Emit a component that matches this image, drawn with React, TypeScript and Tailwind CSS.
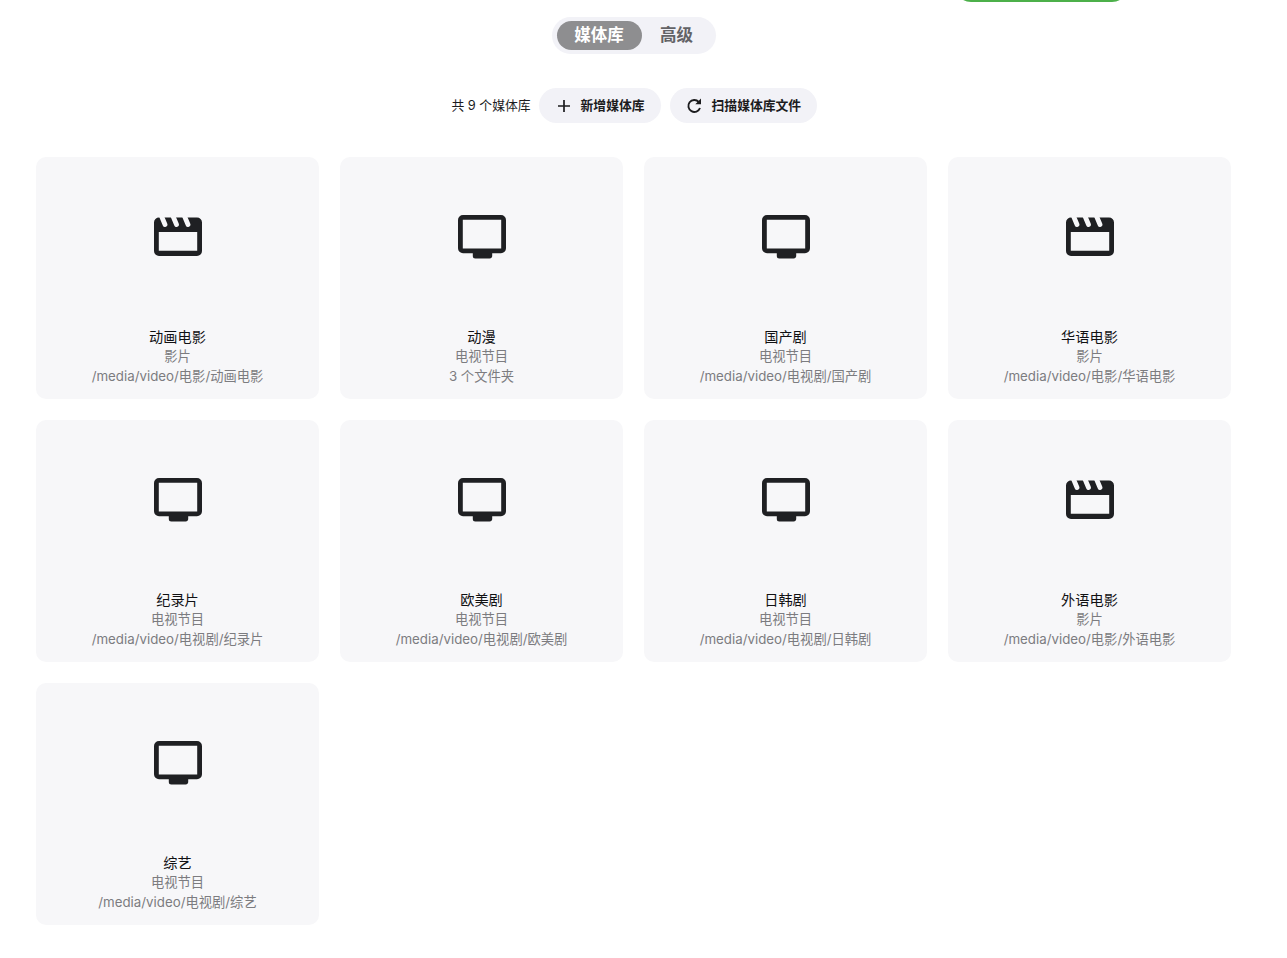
import React from "react";

function Clapper() {
  return (
    <svg width="48" height="40" viewBox="0 0 48 40" className="block" fill="none">
      <path fillRule="evenodd" clipRule="evenodd" fill="#1f2023" d="M5 .5h38a5 5 0 0 1 5 5V34a5 5 0 0 1-5 5H5a5 5 0 0 1-5-5V5.500a5 5 0 0 1 5-5ZM4.800 15v18.800h38.400V15H4.800Z" />
      <path d="M7 -2l4 9.500M18.500 -2l4 9.500M30 -2l4 9.500" stroke="#f7f7f9" strokeWidth="4.800" strokeLinecap="round" />
    </svg>
  );
}

function Tv() {
  return (
    <svg width="48" height="44" viewBox="0 0 48 44" className="block" fill="none">
      <path fillRule="evenodd" clipRule="evenodd" fill="#1f2023" d="M5 0h38a5 5 0 0 1 5 5v28.300a5 5 0 0 1-5 5H5a5 5 0 0 1-5-5V5a5 5 0 0 1 5-5Zm-.200 4.800v28.700h38.400V4.800H4.800Z" />
      <path fill="#1f2023" d="M14.800 37h19.400v4c0 1.400-1.100 2.500-2.500 2.500H17.300a2.500 2.500 0 0 1-2.500-2.500v-4Z" />
    </svg>
  );
}

const items = [
  { icon: "movie", name: "动画电影", type: "影片", path: "/media/video/电影/动画电影" },
  { icon: "tv", name: "动漫", type: "电视节目", path: "3 个文件夹" },
  { icon: "tv", name: "国产剧", type: "电视节目", path: "/media/video/电视剧/国产剧" },
  { icon: "movie", name: "华语电影", type: "影片", path: "/media/video/电影/华语电影" },
  { icon: "tv", name: "纪录片", type: "电视节目", path: "/media/video/电视剧/纪录片" },
  { icon: "tv", name: "欧美剧", type: "电视节目", path: "/media/video/电视剧/欧美剧" },
  { icon: "tv", name: "日韩剧", type: "电视节目", path: "/media/video/电视剧/日韩剧" },
  { icon: "movie", name: "外语电影", type: "影片", path: "/media/video/电影/外语电影" },
  { icon: "tv", name: "综艺", type: "电视节目", path: "/media/video/电视剧/综艺" },
];

export default function App() {
  return (
    <div className="relative min-h-[958px] overflow-hidden bg-white pl-9 pr-[56px] pt-[17px] font-['Inter','Noto_Sans_CJK_SC',sans-serif] text-[#1c1c1e]">
      <div className="absolute left-[955px] top-[-30px] h-[32px] w-[173px] rounded-[16px] bg-[#4cb04a]" />

      <div className="flex justify-center">
        <div className="flex h-[37px] w-[164px] items-center rounded-full bg-[#f2f2f7] pl-[5px]">
          <div className="flex h-[29px] w-[85px] items-center justify-center rounded-full bg-[#8e8e90] text-[16.500px] font-bold text-white">媒体库</div>
          <div className="flex h-[29px] w-[70px] items-center justify-center text-[16.500px] font-bold text-[#636366]">高级</div>
        </div>
      </div>

      <div className="mt-[34px] flex h-[35px] items-center justify-center pl-px">
        <span className="mr-2 text-[12.800px] text-[#1c1c1e]">共 9 个媒体库</span>
        <button className="flex h-[35px] w-[122px] items-center rounded-full bg-[#f2f2f7] pl-[16px] text-[12.800px] font-bold">
          <svg width="16" height="16" viewBox="0 0 16 16" fill="none" stroke="#1c1c1e" strokeWidth="1.700" className="mr-[10px] translate-x-px">
            <path d="M8 2v12M2 8h12" />
          </svg>
          新增媒体库
        </button>
        <button className="ml-[9px] flex h-[35px] w-[147px] items-center rounded-full bg-[#f2f2f7] pl-[16px] text-[12.800px] font-bold">
          <svg width="17" height="17" viewBox="0 0 17 17" fill="none" className="mr-[9px]">
            <path d="M14 11a6 6 0 1 1-1.300-6.200" stroke="#1c1c1e" strokeWidth="1.900" />
            <path d="M15 1.500v5.700H9.300L15 1.500Z" fill="#1c1c1e" />
          </svg>
          扫描媒体库文件
        </button>
      </div>

      <div className="mt-[34px] grid grid-cols-4 gap-[21px]">
        {items.map((it) => (
          <div key={it.name} className="flex h-[242px] flex-col items-center rounded-[10px] bg-[#f7f7f9] text-center">
            <div className={it.icon === "movie" ? "mt-[60px] h-[110px]" : "mt-[57.500px] h-[112.500px]"}>
              {it.icon === "movie" ? <Clapper /> : <Tv />}
            </div>
            <div className="text-[14.200px] leading-[20px] font-normal text-[#111113]">{it.name}</div>
            <div className="text-[13.300px] leading-[19px] text-[#7c7c80]">{it.type}</div>
            <div className="text-[13.300px] leading-[20px] text-[#7c7c80]">{it.path}</div>
          </div>
        ))}
      </div>
    </div>
  );
}
